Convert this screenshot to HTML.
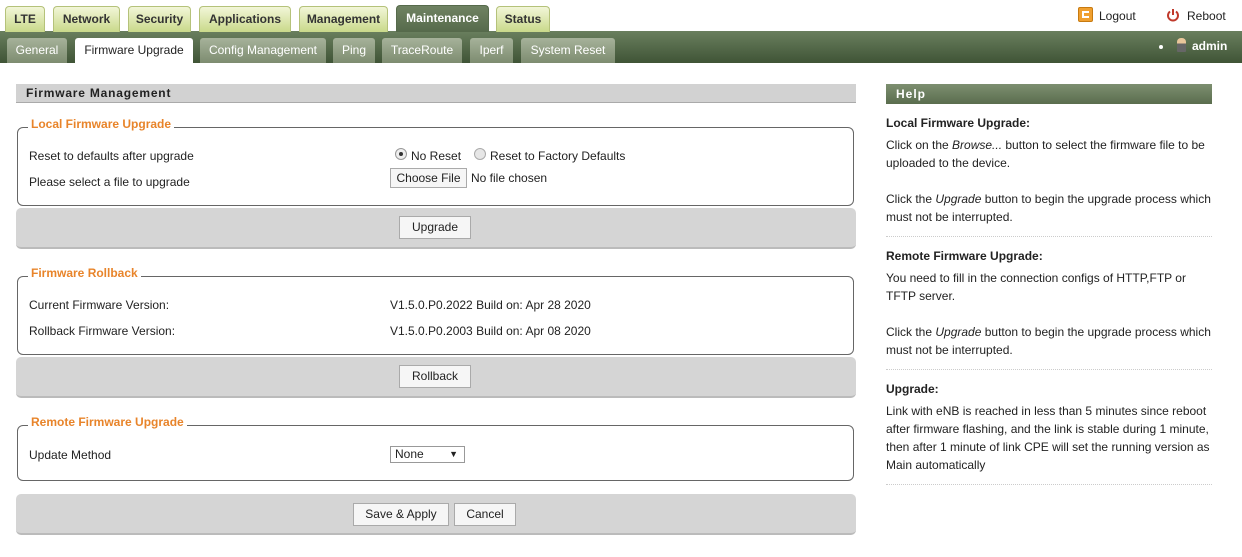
<!DOCTYPE html>
<html><head><meta charset="utf-8"><style>
*{margin:0;padding:0;box-sizing:border-box}
body{width:1242px;height:557px;background:#fff;font-family:"Liberation Sans",Arial,sans-serif;font-size:12px;color:#222;position:relative;overflow:hidden}
.a{position:absolute}
.tab{position:absolute;top:6px;height:26px;border:1px solid #b5c27a;border-bottom:none;border-radius:4px 4px 0 0;background:linear-gradient(#f2f6d8,#c9d98a);color:#333;font-weight:bold;font-size:12px;text-align:center;line-height:24px}
.tab.on{background:linear-gradient(#6f8262,#566a4b);color:#fff;border-color:#566a4b;top:5px;height:27px}
.bar{position:absolute;left:0;top:31px;width:1242px;height:32px;background:linear-gradient(#6a7f5e,#3f5436)}
.st{position:absolute;top:38px;height:25px;border-radius:3px 3px 0 0;background:linear-gradient(#a6b29a,#7d8c70);color:#fff;font-size:12px;text-align:center;line-height:25px}
.st.on{background:#fff;color:#222}
.hdr{position:absolute;left:16px;top:84px;width:840px;height:19px;background:#d2d2d2;border-bottom:1px solid #aaa;font-weight:bold;font-size:12px;letter-spacing:.8px;padding-left:10px;line-height:19px;color:#222}
.fs{position:absolute;left:17px;width:837px;border:1px solid #666;border-radius:6px}
.lg{position:absolute;left:28px;background:#fff;color:#e8842a;font-weight:bold;font-size:12px;padding:0 3px}
.bb{position:absolute;left:16px;width:840px;height:41px;background:#d5d5d5;border-radius:5px;border-bottom:2px solid #bbb}
.btn{position:absolute;height:23px;border:1px solid #aaa;background:#f6f6f6;font-size:12px;text-align:center;line-height:21px}
.t{position:absolute;font-size:12px;white-space:nowrap}
.h p{font-size:12px;line-height:18px;margin:0}
.h b{display:block;font-size:12px;margin:0 0 6px}
.dot{border-bottom:1px dotted #ccc;margin:10px 0 12px;width:326px}
</style></head><body>
<div class="bar"></div>
<div class="tab" style="left:5px;width:40px">LTE</div>
<div class="tab" style="left:53px;width:67px">Network</div>
<div class="tab" style="left:128px;width:63px">Security</div>
<div class="tab" style="left:199px;width:92px">Applications</div>
<div class="tab" style="left:299px;width:89px">Management</div>
<div class="tab on" style="left:396px;width:93px">Maintenance</div>
<div class="tab" style="left:496px;width:54px">Status</div>

<div class="st" style="left:7px;width:60px">General</div>
<div class="st on" style="left:75px;width:118px">Firmware Upgrade</div>
<div class="st" style="left:200px;width:126px">Config Management</div>
<div class="st" style="left:333px;width:42px">Ping</div>
<div class="st" style="left:382px;width:80px">TraceRoute</div>
<div class="st" style="left:470px;width:43px">Iperf</div>
<div class="st" style="left:521px;width:94px">System Reset</div>

<div class="a" style="left:1078px;top:7px;width:15px;height:15px;background:#f0a030;border:1px solid #c77a10;border-radius:2px"><div class="a" style="left:3px;top:3px;width:7px;height:7px;border:2px solid #fff;border-right:none"></div></div>
<div class="t" style="left:1099px;top:9px">Logout</div>
<svg class="a" style="left:1166px;top:8px" width="14" height="14" viewBox="0 0 14 14"><path d="M4 3.5A5 5 0 1 0 10 3.5" fill="none" stroke="#c0392b" stroke-width="2"/><path d="M7 1v6" stroke="#c0392b" stroke-width="2"/></svg>
<div class="t" style="left:1187px;top:9px">Reboot</div>
<div class="a" style="left:1159px;top:45px;width:4px;height:4px;background:#fff;border-radius:2px"></div>
<div class="a" style="left:1177px;top:38px;width:9px;height:14px;background:linear-gradient(#e9c69a 40%,#666 40%);border-radius:4px 4px 1px 1px"></div>
<div class="t" style="left:1192px;top:39px;color:#fff;font-weight:bold">admin</div>

<div class="hdr">Firmware Management</div>

<div class="fs" style="top:127px;height:79px"></div>
<div class="lg" style="top:117px">Local Firmware Upgrade</div>
<div class="t" style="left:29px;top:149px">Reset to defaults after upgrade</div>
<div class="a" style="left:395px;top:148px;width:12px;height:12px;border:1px solid #999;border-radius:50%;background:#eee"><div class="a" style="left:3px;top:3px;width:4px;height:4px;border-radius:50%;background:#333"></div></div>
<div class="t" style="left:411px;top:149px">No Reset</div>
<div class="a" style="left:474px;top:148px;width:12px;height:12px;border:1px solid #aaa;border-radius:50%;background:#e6e6e6"></div>
<div class="t" style="left:490px;top:149px">Reset to Factory Defaults</div>
<div class="t" style="left:29px;top:175px">Please select a file to upgrade</div>
<div class="btn" style="left:390px;top:168px;width:77px;height:20px;line-height:18px">Choose File</div>
<div class="t" style="left:471px;top:171px">No file chosen</div>
<div class="bb" style="top:208px"></div>
<div class="btn" style="left:399px;top:216px;width:72px">Upgrade</div>

<div class="fs" style="top:276px;height:79px"></div>
<div class="lg" style="top:266px">Firmware Rollback</div>
<div class="t" style="left:29px;top:298px">Current Firmware Version:</div>
<div class="t" style="left:390px;top:298px">V1.5.0.P0.2022 Build on: Apr 28 2020</div>
<div class="t" style="left:29px;top:324px">Rollback Firmware Version:</div>
<div class="t" style="left:390px;top:324px">V1.5.0.P0.2003 Build on: Apr 08 2020</div>
<div class="bb" style="top:357px"></div>
<div class="btn" style="left:399px;top:365px;width:72px">Rollback</div>

<div class="fs" style="top:425px;height:56px"></div>
<div class="lg" style="top:415px">Remote Firmware Upgrade</div>
<div class="t" style="left:29px;top:448px">Update Method</div>
<div class="btn" style="left:390px;top:446px;width:75px;height:17px;line-height:15px;text-align:left;padding-left:4px;background:#fff;border-color:#999">None<span style="position:absolute;right:6px;font-size:9px">▼</span></div>
<div class="bb" style="top:494px"></div>
<div class="btn" style="left:353px;top:503px;width:96px">Save &amp; Apply</div>
<div class="btn" style="left:454px;top:503px;width:62px">Cancel</div>

<div class="a" style="left:886px;top:84px;width:326px;height:20px;background:linear-gradient(#7d8f70,#5a6d4e);color:#fff;font-weight:bold;letter-spacing:1px;padding-left:10px;line-height:20px">Help</div>
<div class="a h" style="left:886px;top:116px;width:330px">
<b>Local Firmware Upgrade:</b>
<p>Click on the <i>Browse...</i> button to select the firmware file to be uploaded to the device.</p><p>&nbsp;</p>
<p>Click the <i>Upgrade</i> button to begin the upgrade process which must not be interrupted.</p>
<div class="dot"></div>
<b>Remote Firmware Upgrade:</b>
<p>You need to fill in the connection configs of HTTP,FTP or TFTP server.</p><p>&nbsp;</p>
<p>Click the <i>Upgrade</i> button to begin the upgrade process which must not be interrupted.</p>
<div class="dot"></div>
<b>Upgrade:</b>
<p>Link with eNB is reached in less than 5 minutes since reboot after firmware flashing, and the link is stable during 1 minute, then after 1 minute of link CPE will set the running version as Main automatically</p>
<div class="dot"></div>
</div>
</body></html>
